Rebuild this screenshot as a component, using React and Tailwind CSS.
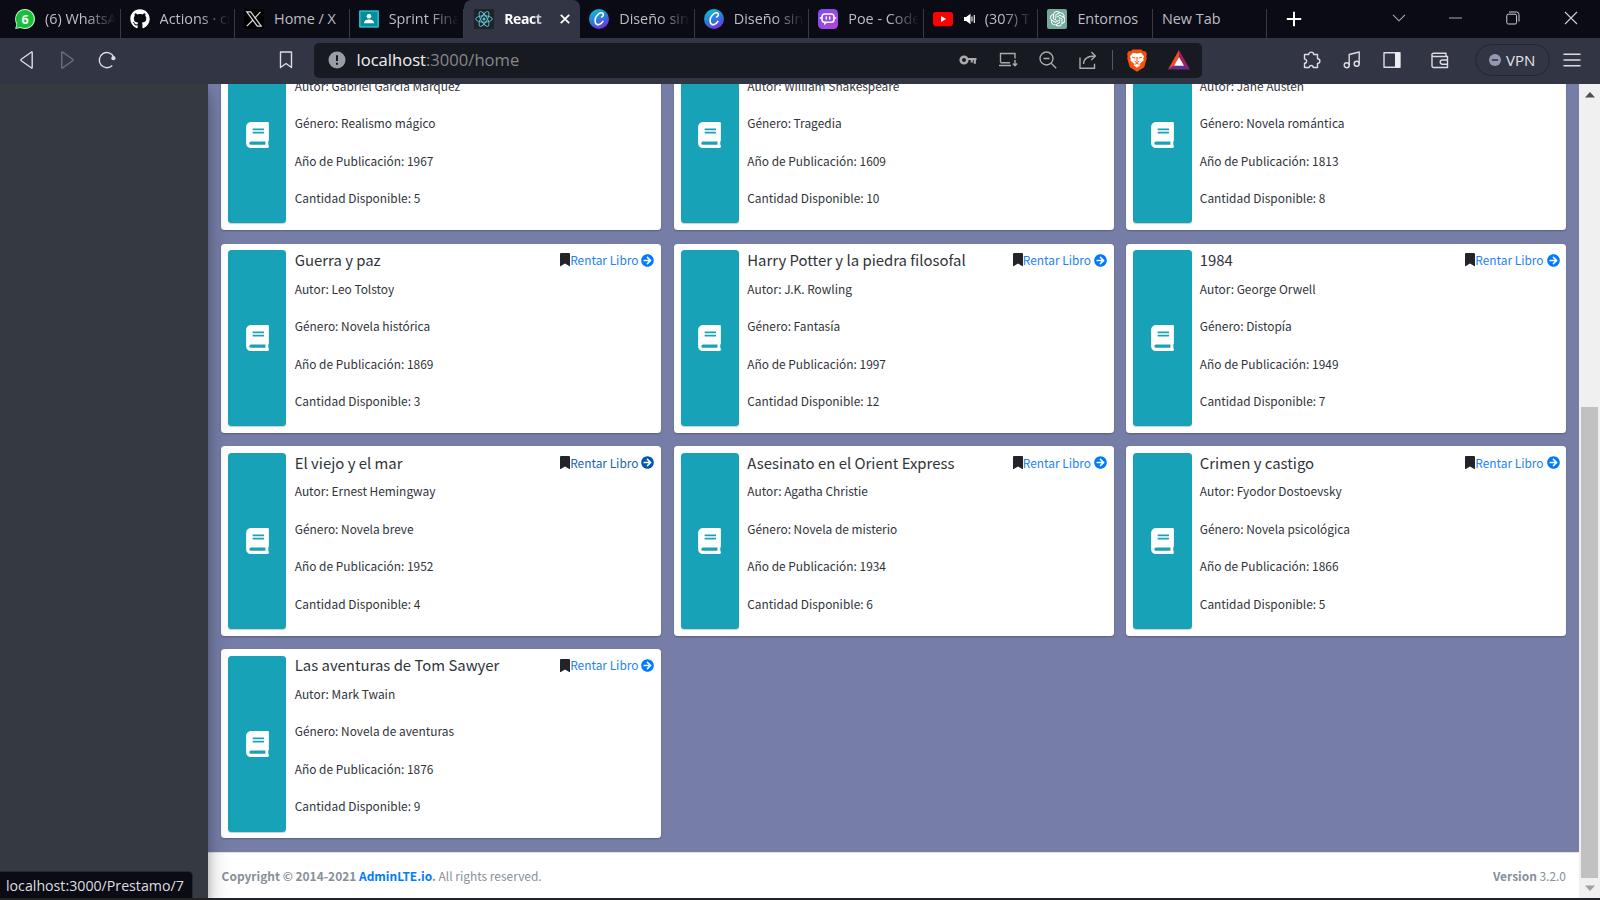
import React from 'react';
import { FaBook, FaBookmark, FaArrowCircleRight, FaGithub } from 'react-icons/fa';
import { SiOpenai } from 'react-icons/si';

const books = [
  [null, 'Gabriel García Márquez', 'Realismo mágico', 1967, 5],
  [null, 'William Shakespeare', 'Tragedia', 1609, 10],
  [null, 'Jane Austen', 'Novela romántica', 1813, 8],
  ['Guerra y paz', 'Leo Tolstoy', 'Novela histórica', 1869, 3],
  ['Harry Potter y la piedra filosofal', 'J.K. Rowling', 'Fantasía', 1997, 12],
  ['1984', 'George Orwell', 'Distopía', 1949, 7],
  ['El viejo y el mar', 'Ernest Hemingway', 'Novela breve', 1952, 4],
  ['Asesinato en el Orient Express', 'Agatha Christie', 'Novela de misterio', 1934, 6],
  ['Crimen y castigo', 'Fyodor Dostoevsky', 'Novela psicológica', 1866, 5],
  ['Las aventuras de Tom Sawyer', 'Mark Twain', 'Novela de aventuras', 1876, 9],
];

function BookCard({ book, hovered }) {
  const [title, author, genre, year, count] = book;
  return (
    <article className="flex h-[189.3px] rounded-[3.5px] bg-white p-[6.67px] shadow-[0_1px_2px_rgba(0,0,0,0.25)]">
      <div className="flex w-[58.4px] shrink-0 items-center justify-center rounded-[3.5px] bg-[#17a2b8] shadow-[0_1px_1px_rgba(0,0,0,0.2)]">
        <FaBook className="h-[26px] w-[23px] text-white" />
      </div>
      <div className="-mt-[0.7px] flex min-w-0 flex-1 flex-col pl-[8.3px] text-[11.91px] text-[#2f343a]">
        <div className="flex h-[21px] items-center justify-between">
          {title && (
            <>
              <h2 className="text-[14.9px] leading-[20px] whitespace-nowrap">{title}</h2>
              <a className={`flex items-center whitespace-nowrap ${hovered ? 'text-[#1c62b4]' : 'text-[#1c82f5]'}`}>
                <FaBookmark className="h-[13.5px] w-[10px] text-[#212529]" />
                <span className="leading-[20px]">Rentar Libro</span>
                <FaArrowCircleRight className={`ml-[3px] size-[13px] ${hovered ? 'text-[#0056b3]' : 'text-[#007bff]'}`} />
              </a>
            </>
          )}
        </div>
        <p className="mt-[8px] h-[20px] leading-[20px]">Autor: {author}</p>
        <p className="mt-[17.5px] h-[20px] leading-[20px]">Género: {genre}</p>
        <p className="mt-[17.5px] h-[20px] leading-[20px]">Año de Publicación: {year}</p>
        <p className="mt-[17.5px] h-[20px] leading-[20px]">Cantidad Disponible: {count}</p>
      </div>
    </article>
  );
}

const WhatsApp = () => (
  <svg viewBox="0 0 20 20" className="size-5">
    <path d="M10 0A10 10 0 1 1 5.6 19L.2 20l1.2-5A10 10 0 0 1 10 0Z" fill="#c9f5cf" />
    <path d="M10 1A9 9 0 1 1 5.7 18L1.300 18.900l1-4.200A9 9 0 0 1 10 1Z" fill="#18bf3b" />
    <text x="10" y="14.5" textAnchor="middle" fontSize="12.5" fontWeight="700" fill="#fff" fontFamily="Open Sans, sans-serif">6</text>
  </svg>
);
const XLogo = () => (
  <svg viewBox="0 0 20 20" className="size-5">
    <rect width="20" height="20" fill="#000" />
    <path d="M2.800 2.800h3.900l10.500 14.400h-3.900ZM16.500 2.800l-6 6.500M9 11l-6.200 6.200" fill="none" stroke="#ddd" strokeWidth="1.200" />
  </svg>
);
const Classroom = () => (
  <svg viewBox="0 0 20 20" className="size-5">
    <rect y="1.300" width="20" height="17.400" rx="1" fill="#20b5c4" />
    <rect x="1.800" y="3" width="16.400" height="14" fill="#078c9b" />
    <circle cx="10" cy="7.300" r="2.300" fill="#fff" />
    <path d="M5 14.200c0-2.600 2.500-3.700 5-3.700s5 1.100 5 3.700Z" fill="#fff" />
  </svg>
);
const ReactLogo = () => (
  <svg viewBox="0 0 20 20" className="size-5">
    <rect width="20" height="20" rx="1" fill="#1f2226" />
    <g fill="none" stroke="#5fc4d8" strokeWidth="0.95">
      <ellipse cx="10" cy="10" rx="8.300" ry="3.200" />
      <ellipse cx="10" cy="10" rx="8.300" ry="3.200" transform="rotate(60 10 10)" />
      <ellipse cx="10" cy="10" rx="8.300" ry="3.200" transform="rotate(120 10 10)" />
    </g>
    <circle cx="10" cy="10" r="1.500" fill="#5fc4d8" />
  </svg>
);
const Canva = () => (
  <svg viewBox="0 0 20 20" className="size-5">
    <defs>
      <linearGradient id="canva" x1="0.25" y1="0" x2="0.7" y2="1">
        <stop offset="0" stopColor="#08c4cf" />
        <stop offset="0.5" stopColor="#2a7ddc" />
        <stop offset="1" stopColor="#7a2be4" />
      </linearGradient>
    </defs>
    <circle cx="10" cy="10" r="10" fill="url(#canva)" />
    <path d="M12.600 8c1.500-.5 2.200-2.300 1.500-3.400-.8-1.200-3-1-4.600.4C7.200 7 5.800 10.200 6.200 12.800c.3 2.300 2.100 3.200 4.100 2.600 1.500-.5 2.700-1.500 3.600-3" fill="none" stroke="#fff" strokeWidth="1.600" strokeLinecap="round" />
  </svg>
);
const Poe = () => (
  <svg viewBox="0 0 20 20" className="size-5">
    <defs>
      <linearGradient id="poe" x1="0" y1="0" x2="1" y2="1">
        <stop offset="0" stopColor="#7a4df0" />
        <stop offset="1" stopColor="#b544e0" />
      </linearGradient>
    </defs>
    <rect width="20" height="20" rx="4.500" fill="url(#poe)" />
    <rect x="4" y="5" width="12" height="8.200" rx="2.800" fill="none" stroke="#fff" strokeWidth="1.500" />
    <path d="M2.300 9h1.500M16.200 9h1.500M8.300 8v2M11.700 8v2" stroke="#fff" strokeWidth="1.500" strokeLinecap="round" />
    <path d="M6 12.800v3.400l3.500-3Z" fill="#fff" />
  </svg>
);
const YouTube = () => (
  <svg viewBox="0 0 20 20" className="size-5">
    <rect y="3" width="20" height="14.200" rx="3" fill="#f00" />
    <path d="M8 7v6l5.200-3Z" fill="#fff" />
  </svg>
);
const ChatGPT = () => (
  <span className="flex size-5 items-center justify-center rounded-[2px] bg-[#74aa9c]">
    <SiOpenai className="size-[15.5px] text-white" />
  </span>
);
const Speaker = () => (
  <svg viewBox="0 0 14 12" className="mr-[8px] h-3 w-[14px] shrink-0">
    <path d="M1 4h2.200L7.500 .8v10.400L3.200 8H1Z" fill="#fff" />
    <path d="M9 3.500v5M11.300 2v8" fill="none" stroke="#fff" strokeWidth="1.100" />
  </svg>
);
const Brave = () => (
  <svg viewBox="0 0 20 23" className="ml-[14px] h-[23px] w-5">
    <path d="M5.500 .5h9l1.700 1.800 2-.2L20 5l-.7 2 .5 2.300-2.600 9L10 22.800l-7.200-4.500L.2 9.300.7 7 0 5l1.800-2.900 2 .2Z" fill="#f4500f" />
    <path d="M6 3.800l4 .7 4-.7 3 3.400-.7 2.300.3 2-3.600 3.200.3 1.500-3.300 2.600-3.300-2.600.3-1.500-3.600-3.200.3-2L3 7.200Z" fill="#fff" />
    <path d="M5 8l3.300 1.200M15 8l-3.300 1.200M10 8v4.500M7.800 12.300L10 13.500l2.200-1.200M7.500 15.300L10 14.500l2.500.8" fill="none" stroke="#f4500f" strokeWidth="1" />
  </svg>
);

const tabs = [
  { icon: WhatsApp, label: '(6) WhatsA', fade: true },
  { icon: () => <FaGithub className="size-5 text-white" />, label: 'Actions · cr', fade: true },
  { icon: XLogo, label: 'Home / X' },
  { icon: Classroom, label: 'Sprint Fina', fade: true },
  { icon: ReactLogo, label: 'React', active: true },
  { icon: Canva, label: 'Diseño sin', fade: true },
  { icon: Canva, label: 'Diseño sin', fade: true },
  { icon: Poe, label: 'Poe - Code', fade: true },
  { icon: YouTube, label: '(307) T', sound: true, fade: true },
  { icon: ChatGPT, label: 'Entornos' },
  { label: 'New Tab' },
];

function Tab({ tab }) {
  const Icon = tab.icon;
  if (tab.active) {
    return (
      <div className="flex h-[38px] w-[116px] shrink-0 items-center rounded-t-[7px] bg-[#323543] pl-[10px]">
        <Icon />
        <div className="ml-[10px] w-[40px] text-[14px] tracking-[-0.400px] leading-[22px] font-bold whitespace-nowrap text-white [mask-image:linear-gradient(to_right,#000_70%,#0008)]">
          {tab.label}
        </div>
        <svg viewBox="0 0 10 10" className="ml-[16px] size-[10px]">
          <path d="M.8 .8l8.400 8.400M9.200 .8L.8 9.200" stroke="#fff" strokeWidth="1.800" />
        </svg>
      </div>
    );
  }
  return (
    <div className="flex h-[38px] w-[114.550px] shrink-0 items-center pt-[9px]">
      <div className="flex h-[29px] w-full items-center border-r border-[#383a43] pb-[9px] pl-[9px]">
        {Icon && <Icon />}
        <div className={`flex min-w-0 flex-1 items-center ${Icon ? 'ml-[10px]' : ''} ${tab.fade ? '[mask-image:linear-gradient(to_right,#000_calc(100%-34px),transparent_calc(100%-4px))]' : ''}`}>
          {tab.sound && <Speaker />}
          <span className="text-[14.400px] leading-[22px] whitespace-nowrap text-[#bdbdc2]">{tab.label}</span>
        </div>
      </div>
    </div>
  );
}

function TabBar() {
  return (
    <div className="flex h-[37.500px] shrink-0 items-center overflow-hidden bg-[#0b0b15] pl-[6px]">
      {tabs.map((t, i) => <Tab key={i} tab={t} />)}
      <svg viewBox="0 0 16 16" className="ml-[18.500px] size-4">
        <path d="M8 .8v14.400M.8 8h14.400" stroke="#fff" strokeWidth="2" />
      </svg>
      <div className="mr-[22px] ml-auto flex items-center pb-[2px]">
        <svg viewBox="0 0 14 8" className="h-2 w-[14px]"><path d="M1 .8l6 6 6-6" fill="none" stroke="#aaaab0" strokeWidth="1.100" /></svg>
        <svg viewBox="0 0 13 2" className="ml-[43px] h-[2px] w-[13px]"><path d="M0 1h13" stroke="#aaaab0" /></svg>
        <svg viewBox="0 0 14 14" className="ml-[44px] size-[14px]">
          <rect x=".8" y="3.200" width="9.800" height="9.800" rx="1.500" fill="none" stroke="#d0d0d4" />
          <path d="M3 1h7.500a2.500 2.500 0 0 1 2.500 2.500v7" fill="none" stroke="#d0d0d4" />
        </svg>
        <svg viewBox="0 0 14 14" className="ml-[44px] size-[14px]"><path d="M1 1l12 12M13 1L1 13" stroke="#d0d0d4" strokeWidth="1.100" /></svg>
      </div>
    </div>
  );
}

function Toolbar() {
  const s = { fill: 'none', stroke: '#dcdde2', strokeWidth: 1.4, strokeLinejoin: 'round' };
  const g = { fill: 'none', stroke: '#a9abb0', strokeWidth: 1.4 };
  return (
    <div className="flex h-[46.500px] shrink-0 items-center bg-[#323543] pb-[1px] pl-[18px]">
      <svg viewBox="0 0 18 18" className="size-[18px]"><path d="M14.200 1.200v15.600a1 1 0 0 1-1 0L3.300 9.800a1 1 0 0 1 0-1.600L13.200 1.200a1 1 0 0 1 1 0Z" {...s} /></svg>
      <svg viewBox="0 0 18 18" className="ml-[22px] size-[18px] opacity-35"><path d="M3.800 1.200v15.600a1 1 0 0 0 1 0l9.900-7a1 1 0 0 0 0-1.600l-9.900-7a1 1 0 0 0-1 0Z" {...s} /></svg>
      <svg viewBox="0 0 18 18" className="ml-[22px] size-[18px]">
        <path d="M14.300 14.500A7.600 7.600 0 1 1 15.800 6" {...s} />
        <circle cx="15.400" cy="7.200" r="2.100" fill="#dcdde2" />
      </svg>
      <svg viewBox="0 0 14 18" className="ml-[163px] h-[18px] w-[14px]"><path d="M1.500 1h11v15.500L7 12.500l-5.500 4Z" {...s} /></svg>
      <div className="ml-[20.500px] flex h-[35px] w-[888px] shrink-0 items-center rounded-[5px] bg-[#181a21] pl-[14px]">
        <svg viewBox="0 0 18 18" className="size-[18px]">
          <circle cx="9" cy="9" r="8.500" fill="#9b9da4" />
          <path d="M9 4.300v5.700M9 11.800v2" stroke="#181a21" strokeWidth="2" />
        </svg>
        <div className="ml-[11px] w-[602px] text-[16.600px] leading-[24px] text-[#85878d]"><span className="text-[#f2f2f4]">localhost</span>:3000/home</div>
        <svg viewBox="0 0 18 12" className="h-3 w-[18px]">
          <circle cx="5" cy="6" r="3.300" fill="none" stroke="#a9abb0" strokeWidth="2.600" />
          <path d="M9 5h8.500M15.800 5v4.800M12.800 5v3.500" fill="none" stroke="#a9abb0" strokeWidth="2.200" />
        </svg>
        <svg viewBox="0 0 20 16" className="ml-[21.500px] h-4 w-5">
          <path d="M2.500 10.500v-9h14.500v5M1 13.500h12M2.500 10.800h9.500" {...g} />
          <path d="M17 8v5.500M14.800 11.500l2.200 2.300 2.200-2.300" {...g} />
        </svg>
        <svg viewBox="0 0 18 18" className="ml-[20.500px] size-[18px]"><circle cx="7.500" cy="7.500" r="6.500" {...g} /><path d="M12.200 12.200l5 5M4.500 7.500h6" {...g} /></svg>
        <svg viewBox="0 0 18 18" className="ml-[22.500px] size-[18px]">
          <path d="M1 6.500v10.700h14.500v-4.500" {...g} />
          <path d="M4.500 13C4.700 7.500 8 5 16 5M12.300 1L16.400 5l-4.100 4" {...g} />
        </svg>
        <span className="ml-[15px] h-5 w-px bg-[#55575e]" />
        <Brave />
        <svg viewBox="0 0 22 20" className="ml-[21px] h-5 w-[22px]">
          <path d="M11 0v7L6 16l-6 3.500Z" fill="#ff4724" />
          <path d="M11 0l11 19.500-6-3.500-5-9Z" fill="#9e1f63" />
          <path d="M0 19.500L6 15.500h10l6 4Z" fill="#662d91" />
          <path d="M11 7l5 8.700H6Z" fill="#fff" />
        </svg>
      </div>
      <svg viewBox="0 0 18 18" className="ml-[101px] size-[18px]">
        <path d="M1.500 3.500h4.200c0-3.200 5-3.200 5 0h3.800v4.200c3.200 0 3.200 4.800 0 4.800v4h-4.300c0-2.700-4-2.700-4 0H1.500v-4.200c2.800 0 2.800-4.200 0-4.200Z" {...s} />
      </svg>
      <svg viewBox="0 0 18 18" className="ml-[22.500px] size-[18px]">
        <circle cx="3.700" cy="14.300" r="2.500" {...s} /><circle cx="13.700" cy="12.800" r="2.500" {...s} />
        <path d="M6.200 14.300V3.500l10-2.500v11.800" {...s} />
      </svg>
      <svg viewBox="0 0 18 18" className="ml-[22px] size-[18px]"><rect x="1" y="1.700" width="16" height="14.600" {...s} /><path d="M12 1.500h5v15h-5Z" fill="#eeeef2" /></svg>
      <svg viewBox="0 0 18 18" className="ml-[29.500px] size-[18px]">
        <path d="M15 5.500V2.200H2.500a1.500 1.500 0 0 0 0 3.300H16.500v11H2.500a1.500 1.500 0 0 1-1.500-1.500V3.500M16.800 9h-5.500a2 2 0 0 0 0 4.200h5.500" {...s} />
      </svg>
      <div className="ml-[26px] flex h-8 w-[75px] items-center justify-center gap-[5.500px] rounded-full border border-[#24262f] text-[15px] leading-5 text-[#e2e3e8]">
        <svg viewBox="0 0 12 12" className="size-3"><circle cx="6" cy="6" r="6" fill="#9499b3" /><path d="M2.800 6h6.400" stroke="#323543" strokeWidth="1.600" /></svg>
        VPN
      </div>
      <svg viewBox="0 0 18 14" className="ml-[13.500px] h-[14px] w-[18px]"><path d="M.5 1.200h17M.5 7h17M.5 12.800h17" stroke="#dcdde2" strokeWidth="1.500" /></svg>
    </div>
  );
}

export default function App() {
  return (
    <div className="flex h-[900px] w-[1600px] flex-col overflow-hidden bg-[#222326] font-['Open_Sans',sans-serif]">
      <TabBar />
      <Toolbar />
      <div className="flex h-[814.300px] shrink-0 overflow-hidden">
        <aside className="relative z-10 flex w-[208.300px] shrink-0 flex-col justify-end bg-[#353a40] shadow-[0_12px_23px_rgba(0,0,0,0.25),0_8px_8px_rgba(0,0,0,0.22)]">
          <div className="flex h-[27px] w-[193px] items-center rounded-tr-[5px] border-t border-r border-[#26272f] bg-[#0b0b15] pl-[6px] text-[14.200px] whitespace-nowrap text-[#dededf]">
            localhost:3000/Prestamo/7
          </div>
        </aside>
        <main className="flex w-[1371px] shrink-0 flex-col justify-end overflow-hidden bg-[#767ea8] font-['Noto_Sans_CJK_SC',sans-serif]">
          <div className="grid shrink-0 grid-cols-3 gap-x-[12.800px] gap-y-[13.400px] px-[13.100px] pb-[13.500px]">
            {books.map((b, i) => <BookCard key={b[1]} book={b} hovered={i === 6} />)}
          </div>
          <footer className="flex h-[46.600px] shrink-0 items-center justify-between border-t border-[#dee2e6] bg-white px-[13.300px] text-[11.940px] leading-5 text-[#869099]">
            <div><b>Copyright © 2014-2021 <span className="text-[#007bff]">AdminLTE.io</span>.</b> All rights reserved.</div>
            <div><b>Version</b> 3.2.0</div>
          </footer>
        </main>
        <div className="flex flex-1 flex-col items-center bg-[#f0f0f1] pt-[8px] pb-[7px]">
          <svg viewBox="0 0 10 6" className="h-[6px] w-[10px]"><path d="M0 5.500L5 0l5 5.500Z" fill="#505050" /></svg>
          <div className="mt-auto h-[471px] w-[17.500px] bg-[#c1c1c1]" />
          <svg viewBox="0 0 10 6" className="mt-[7px] h-[6px] w-[10px]"><path d="M0 .5L5 6l5-5.500Z" fill="#a0a0a0" /></svg>
        </div>
      </div>
    </div>
  );
}
